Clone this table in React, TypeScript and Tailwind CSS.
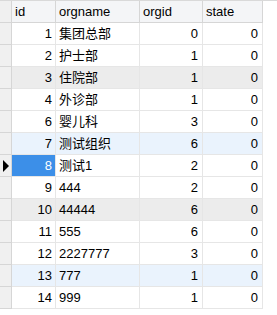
import React from "react";

type Row = { id: number; orgname: string; orgid: number; state: number; tone?: "gray" | "blue" };

const ROWS: Row[] = [
  { id: 1, orgname: "集团总部", orgid: 0, state: 0 },
  { id: 2, orgname: "护士部", orgid: 1, state: 0 },
  { id: 3, orgname: "住院部", orgid: 1, state: 0, tone: "gray" },
  { id: 4, orgname: "外诊部", orgid: 1, state: 0 },
  { id: 6, orgname: "婴儿科", orgid: 3, state: 0 },
  { id: 7, orgname: "测试组织", orgid: 6, state: 0, tone: "blue" },
  { id: 8, orgname: "测试1", orgid: 2, state: 0 },
  { id: 9, orgname: "444", orgid: 2, state: 0 },
  { id: 10, orgname: "44444", orgid: 6, state: 0, tone: "gray" },
  { id: 11, orgname: "555", orgid: 6, state: 0 },
  { id: 12, orgname: "2227777", orgid: 3, state: 0 },
  { id: 13, orgname: "777", orgid: 1, state: 0, tone: "blue" },
  { id: 14, orgname: "999", orgid: 1, state: 0 },
];

const SELECTED = 8;

const cols = "grid grid-cols-[12px_44px_84px_63px_60px] w-[263px]";
const cell = "h-[22px] border-r border-b border-[#e6e6e6] flex items-center";

export default function App() {
  return (
    <div
      className="w-[277px] h-[315px] bg-white border-t border-[#d9d9d9] text-[13px] text-black overflow-hidden"
      style={{ fontFamily: '"Liberation Sans", "Noto Sans CJK SC", sans-serif' }}
    >
      {/* header */}
      <div className={cols}>
        <div className="h-[22px] bg-[#f0f0f0] border-r border-b border-[#d6d6d6]" />
        {["id", "orgname", "orgid", "state"].map((h) => (
          <div
            key={h}
            className="h-[22px] bg-[#f4f5f7] border-r border-b border-[#d6d6d6] flex items-center pl-[3px]"
          >
            {h}
          </div>
        ))}
      </div>

      {ROWS.map((r) => {
        const bg = r.tone === "gray" ? "bg-[#ececec]" : r.tone === "blue" ? "bg-[#eaf3fd]" : "bg-white";
        const sel = r.id === SELECTED;
        return (
          <div key={r.id} className={cols}>
            <div className="h-[22px] bg-[#f0f0f0] border-r border-b border-[#d6d6d6] flex items-center pl-[3px]">
              {sel && (
                <svg width="6" height="12" viewBox="0 0 6 12">
                  <path d="M0 0 L6 6 L0 12 Z" fill="#000" />
                </svg>
              )}
            </div>
            <div className={`${cell} justify-end pr-[3px] ${sel ? "bg-[#3c8fe8] text-white" : bg}`}>{r.id}</div>
            <div className={`${cell} pl-[3px] ${bg}`}>{r.orgname}</div>
            <div className={`${cell} justify-end pr-[4px] ${bg}`}>{r.orgid}</div>
            <div className={`${cell} justify-end pr-[4px] ${bg}`}>{r.state}</div>
          </div>
        );
      })}
    </div>
  );
}
